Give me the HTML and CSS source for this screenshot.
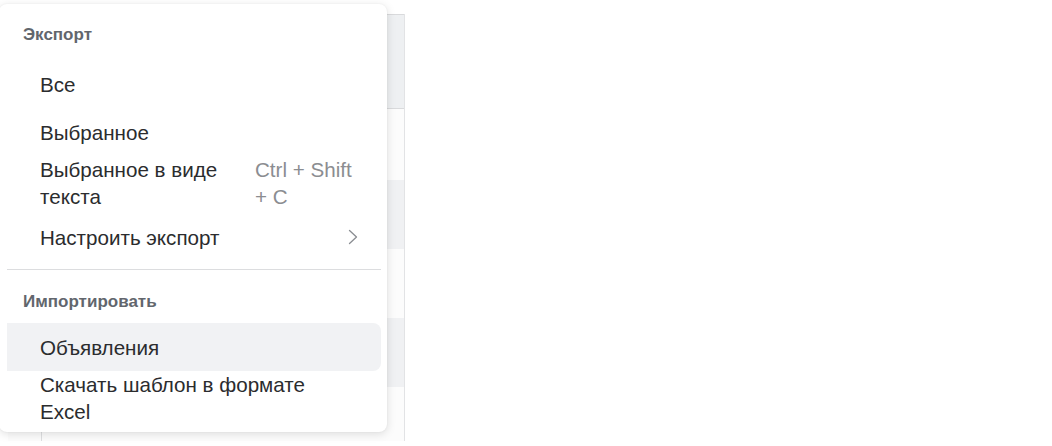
FILE: index.html
```html
<!DOCTYPE html>
<html lang="ru">
<head>
<meta charset="utf-8">
<title>Экспорт</title>
<link rel="stylesheet" href="styles.css">
</head>
<body>
<div class="stage">
  <div class="table">
    <div class="row row--head"></div>
    <div class="row row--h71"></div>
    <div class="row row--alt"></div>
    <div class="row"></div>
    <div class="row row--alt"></div>
    <div class="row row--last"></div>
  </div>

  <div class="menu">
    <div class="menu-header menu-header--first">Экспорт</div>
    <div class="menu-item">Все</div>
    <div class="menu-item">Выбранное</div>
    <div class="menu-item menu-item--tall">
      <span class="label">Выбранное в виде текста</span>
      <span class="shortcut">Ctrl + Shift + C</span>
    </div>
    <div class="menu-item">
      <span class="label">Настроить экспорт</span>
      <svg class="chevron" width="10" height="16" viewBox="0 0 10 16" aria-hidden="true"><path d="M1.5 1.5 L8.5 8 L1.5 14.5" fill="none" stroke="#8a8d92" stroke-width="1.3" stroke-linecap="round" stroke-linejoin="round"/></svg>
    </div>
    <div class="menu-divider"></div>
    <div class="menu-header">Импортировать</div>
    <div class="menu-item menu-item--hover">Объявления</div>
    <div class="menu-item"><span class="label label--narrow">Скачать шаблон в формате Excel</span></div>
  </div>
</div>
</body>
</html>
```

FILE: styles.css
```css
* { box-sizing: border-box; }

html, body {
  margin: 0;
  padding: 0;
  background: #ffffff;
}

body {
  font-family: "Liberation Sans", Arial, sans-serif;
  color: #2b2c2e;
}

.stage {
  position: relative;
  width: 1052px;
  height: 446px;
  overflow: hidden;
}

/* background table, behind the dropdown */
.table {
  margin: 14px 0 0 8px;
  width: 397px;
  border-right: 1px solid #e2e3e5;
  display: flex;
  flex-direction: column;
}

.row {
  height: 69px;
  background: #fcfcfc;
  background-image: linear-gradient(#dedfe1, #dedfe1);
  background-size: 1px 100%;
  background-position: 33px 0;
  background-repeat: no-repeat;
}

.row--head {
  height: 95px;
  background-color: #eef0f2;
  background-image: none;
  border-top: 1px solid #d9dadc;
  border-bottom: 1px solid #d9dadc;
}

.row--h71 { height: 71px; }
.row--alt { background-color: #f0f1f3; }
.row--last { height: 54px; }

/* dropdown menu */
.menu {
  position: absolute;
  left: -1px;
  top: 4px;
  width: 388px;
  padding: 8px 0 7px;
  background: #ffffff;
  border-radius: 8px;
  box-shadow: 0 2px 10px rgba(0, 0, 0, 0.13), 0 0 2px rgba(0, 0, 0, 0.06);
  display: flex;
  flex-direction: column;
}

.menu-header {
  padding: 22px 24px 11px 24px;
  font-size: 17px;
  line-height: 20px;
  font-weight: 700;
  color: #62666d;
}

.menu-header--first {
  padding-top: 13px;
  padding-bottom: 15px;
}

.menu-item {
  margin: 0 6px 0 8px;
  min-height: 48px;
  padding: 0 24px 0 33px;
  display: flex;
  align-items: center;
  justify-content: space-between;
  gap: 24px;
  font-size: 20.6px;
  line-height: 27px;
  color: #2b2c2e;
}

.menu-item--tall {
  padding-bottom: 3px;
  align-items: flex-start;
}

.menu-item--tall .label {
  flex: 1 1 auto;
}

.label--narrow {
  max-width: 300px;
}

.shortcut {
  flex: 0 0 102px;
  color: #8b8d91;
}

.menu-item--hover {
  background: #f1f2f4;
  border-radius: 0 8px 8px 0;
}

.chevron {
  flex: none;
  margin-right: -1px;
}

.menu-divider {
  height: 1px;
  margin: 8px 6px 0 8px;
  background: #dcdddf;
}
```
